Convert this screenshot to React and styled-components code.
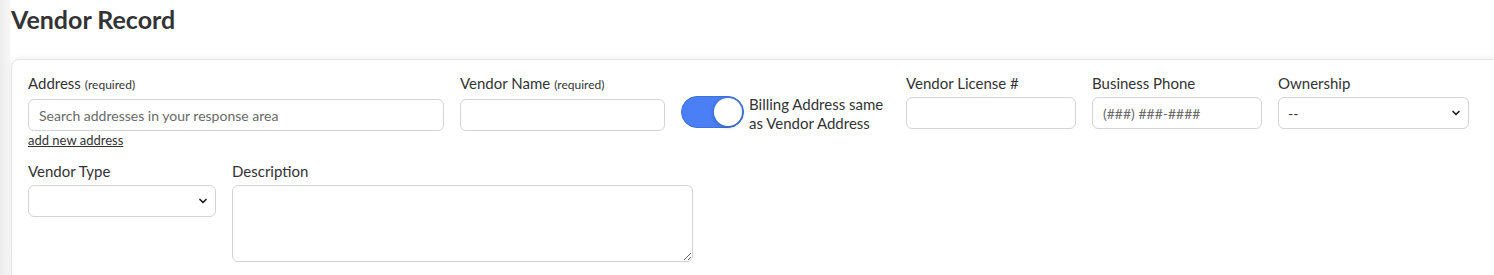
import React, { useState } from 'react';
import styled, { createGlobalStyle } from 'styled-components';
import { ChevronDown } from 'lucide-react';

const GlobalStyle = createGlobalStyle`
    html, body {
        margin: 0;
        padding: 0;
    }
    body {
        font-family: Lato, "Open Sans", Arial, sans-serif;
        color: #333;
        background: linear-gradient(to right, #ececec 0px, #f7f7f7 10px, #ffffff 11px);
        overflow: hidden;
    }
`;

const Page = styled.div`
    padding: 0 0 0 11px;
    min-height: 275px;
`;

const Title = styled.h1`
    margin: 0;
    padding-top: 3px;
    font-size: 25px;
    line-height: 32px;
    font-weight: 700;
    color: #333;
`;

const Card = styled.div`
    margin-top: 24px;
    margin-right: -20px;
    background: #fff;
    border: 1px solid #e4e4e4;
    border-radius: 8px;
    box-shadow: 0 -2px 6px rgba(0, 0, 0, 0.05);
    padding: 13px 16px 40px 16px;
`;

const Row = styled.div`
    display: flex;
    align-items: flex-start;
    gap: 16px;
    margin-bottom: ${(props) => props.spacing || 0}px;
`;

const Field = styled.div`
    display: flex;
    flex-direction: column;
    width: ${(props) => props.width}px;
`;

const Label = styled.label`
    font-size: 15px;
    line-height: 20px;
    margin-bottom: 4px;
    color: #333;
    white-space: nowrap;
`;

const Hint = styled.span`
    font-size: 12px;
    margin-left: 4px;
    color: #333;
`;

const Input = styled.input`
    box-sizing: border-box;
    width: 100%;
    height: 32px;
    border: 1px solid #d4d4d4;
    border-radius: 6px;
    padding: 0 10px;
    font-family: inherit;
    font-size: 14px;
    color: #333;
    outline: none;
    &::placeholder {
        color: #6a6a6a;
    }
`;

const TextArea = styled.textarea`
    box-sizing: border-box;
    width: 100%;
    height: 77px;
    border: 1px solid #d4d4d4;
    border-radius: 6px;
    padding: 6px 10px;
    font-family: inherit;
    font-size: 14px;
    resize: vertical;
    outline: none;
`;

const SelectWrap = styled.div`
    position: relative;
    width: 100%;
    height: 32px;
`;

const Select = styled.select`
    box-sizing: border-box;
    width: 100%;
    height: 32px;
    appearance: none;
    background: #fff;
    border: 1px solid #d4d4d4;
    border-radius: 6px;
    padding: 0 24px 0 9px;
    font-family: inherit;
    font-size: 14px;
    color: #333;
    outline: none;
`;

const Chevron = styled.span`
    position: absolute;
    right: 7px;
    top: 10px;
    display: flex;
    pointer-events: none;
    color: #222;
`;

const AddLink = styled.a`
    font-size: 13px;
    line-height: 16px;
    color: #333;
    text-decoration: underline;
    margin-top: 1px;
`;

const ToggleGroup = styled.div`
    display: flex;
    align-items: flex-start;
    gap: 5px;
    width: 209px;
    padding-top: 23px;
`;

const Track = styled.button`
    box-sizing: border-box;
    flex: none;
    width: 63px;
    height: 32px;
    border-radius: 16px;
    border: 1px solid #3b73d9;
    background: ${(props) => (props.on ? '#4a7ff6' : '#cfd4dc')};
    position: relative;
    padding: 0;
    cursor: pointer;
`;

const Knob = styled.span`
    position: absolute;
    top: 1px;
    left: ${(props) => (props.on ? '32px' : '1px')};
    width: 28px;
    height: 28px;
    border-radius: 50%;
    background: #fff;
    box-shadow: 0 1px 4px rgba(0, 0, 0, 0.3);
`;

const ToggleText = styled.span`
    font-size: 15px;
    line-height: 19px;
    margin-top: -1px;
    color: #333;
`;

const SelectBox = ({ value, children }) => (
    <SelectWrap>
        <Select defaultValue={value}>{children}</Select>
        <Chevron>
            <ChevronDown size={12} strokeWidth={3.5} />
        </Chevron>
    </SelectWrap>
);

const App = () => {
    const [billingSame, setBillingSame] = useState(true);

    return (
        <Page>
            <GlobalStyle />
            <Title>Vendor Record</Title>
            <Card>
                <Row spacing={13}>
                    <Field width={416}>
                        <Label>
                            Address<Hint>(required)</Hint>
                        </Label>
                        <Input placeholder="Search addresses in your response area" />
                        <AddLink href="#">add new address</AddLink>
                    </Field>
                    <Field width={205}>
                        <Label>
                            Vendor Name<Hint>(required)</Hint>
                        </Label>
                        <Input />
                    </Field>
                    <ToggleGroup>
                        <Track on={billingSame} onClick={() => setBillingSame(!billingSame)}>
                            <Knob on={billingSame} />
                        </Track>
                        <ToggleText>
                            Billing Address same
                            <br />
                            as Vendor Address
                        </ToggleText>
                    </ToggleGroup>
                    <Field width={170}>
                        <Label>Vendor License #</Label>
                        <Input />
                    </Field>
                    <Field width={170}>
                        <Label>Business Phone</Label>
                        <Input placeholder="(###) ###-####" />
                    </Field>
                    <Field width={191}>
                        <Label>Ownership</Label>
                        <SelectBox value="--">
                            <option value="--">--</option>
                            <option value="sole">Sole Proprietor</option>
                            <option value="llc">LLC</option>
                        </SelectBox>
                    </Field>
                </Row>
                <Row>
                    <Field width={188}>
                        <Label>Vendor Type</Label>
                        <SelectBox value="">
                            <option value=""></option>
                            <option value="contractor">Contractor</option>
                            <option value="supplier">Supplier</option>
                        </SelectBox>
                    </Field>
                    <Field width={461}>
                        <Label>Description</Label>
                        <TextArea />
                    </Field>
                </Row>
            </Card>
        </Page>
    );
};

export default App;
